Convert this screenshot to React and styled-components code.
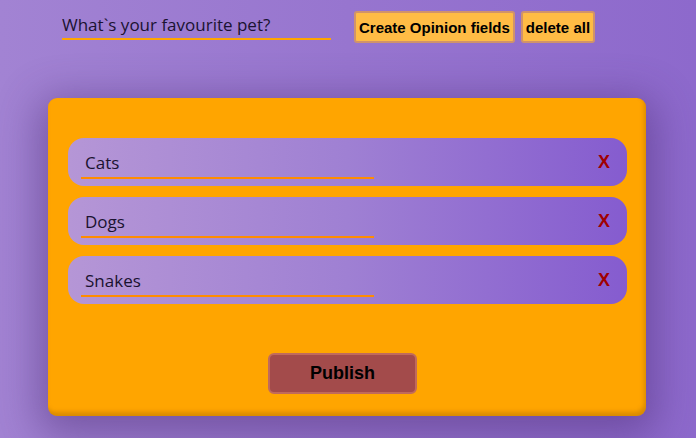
import React from "react";
import styled, { createGlobalStyle } from "styled-components";

const Global = createGlobalStyle`
  html, body { margin: 0; padding: 0; }
  body {
    width: 696px; height: 438px; overflow: hidden;
    background: linear-gradient(90deg, #a283d3 0%, #9775cf 50%, #8d69cc 100%);
    font-family: "Open Sans", "Noto Sans", sans-serif;
  }
`;

const Page = styled.div`
  display: flex; flex-direction: column;
  padding: 11px 0 0 48px;
  width: 598px;
`;

const Toolbar = styled.div`
  display: flex; align-items: flex-start; gap: 6px;
  padding-left: 14px;
  height: 87px;
`;

const QuestionInput = styled.input`
  width: 269px; height: 27px; box-sizing: content-box;
  margin-right: 17px;
  background: transparent; border: none;
  border-bottom: 2px solid #ffa500;
  padding: 0; outline: none;
  font-family: "Open Sans", "Noto Sans", sans-serif;
  font-size: 17px; color: #1a1230;
`;

const SmallButton = styled.button`
  height: 32px; padding: 0 3px;
  background: #ffbc45;
  border: 2px solid #d0936a;
  border-radius: 3px;
  font-family: "Liberation Sans", Arial, sans-serif;
  font-weight: bold; font-size: 15px; color: #000;
`;

const Card = styled.div`
  background: #ffa500;
  border-radius: 9px;
  height: 318px; box-sizing: border-box;
  padding: 40px 19px 0 20px;
  display: flex; flex-direction: column; gap: 11px;
  box-shadow: 0 10px 40px 10px rgba(70, 40, 110, 0.45), inset -2px -4px 4px rgba(150, 90, 0, 0.35);
`;

const Row = styled.div`
  height: 48px; border-radius: 16px;
  background: linear-gradient(90deg, #b596d6 0%, #9f80d3 50%, #855ccf 100%);
  display: flex; align-items: flex-start;
  padding: 0 17px 0 13px;
`;

const OptionInput = styled.input`
  margin-top: 9px;
  width: 289px; height: 30px; box-sizing: content-box;
  padding: 0 0 0 4px;
  background: transparent; border: none; outline: none;
  border-bottom: 2px solid #ff8c00;
  font-family: "Open Sans", "Noto Sans", sans-serif;
  font-size: 17px; color: #1a1230;
`;

const RemoveX = styled.span`
  margin-left: auto; margin-top: 14px;
  font-family: "Liberation Sans", Arial, sans-serif;
  font-weight: bold; font-size: 18px; color: #a00000;
`;

const Footer = styled.div`
  display: flex; justify-content: center;
  margin-top: 38px;
  padding-right: 10px;
`;

const PublishButton = styled.button`
  width: 149px; height: 41px;
  background: #a34b4b;
  border: 2px solid #c06a5c;
  border-radius: 6px;
  font-family: "Liberation Sans", Arial, sans-serif;
  font-weight: bold; font-size: 18px; color: #000;
`;

const options = ["Cats", "Dogs", "Snakes"];

export default function App() {
  return (
    <>
      <Global />
      <Page>
        <Toolbar>
          <QuestionInput defaultValue="What`s your favourite pet?" />
          <SmallButton>Create Opinion fields</SmallButton>
          <SmallButton>delete all</SmallButton>
        </Toolbar>
        <Card>
          {options.map((o) => (
            <Row key={o}>
              <OptionInput defaultValue={o} />
              <RemoveX>X</RemoveX>
            </Row>
          ))}
          <Footer>
            <PublishButton>Publish</PublishButton>
          </Footer>
        </Card>
      </Page>
    </>
  );
}
